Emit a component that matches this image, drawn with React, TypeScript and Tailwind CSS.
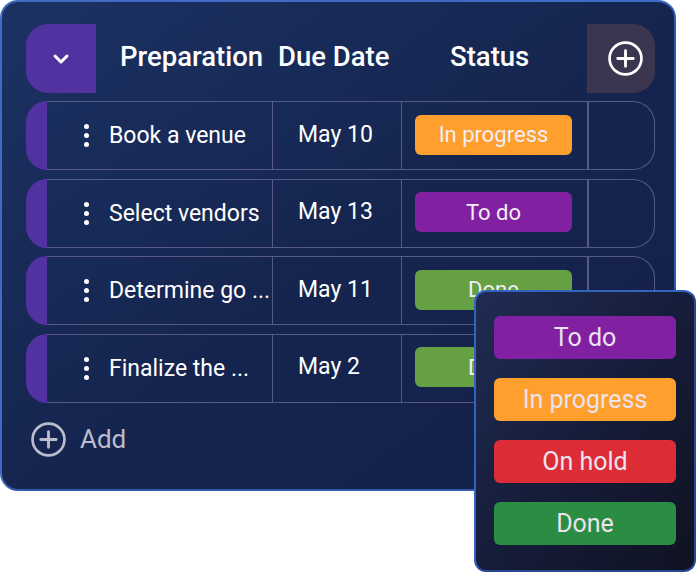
import type { ReactNode } from "react";

const rows = [
  { name: "Book a venue", date: "May 10", status: "In progress" },
  { name: "Select vendors", date: "May 13", status: "To do" },
  { name: "Determine go ...", date: "May 11", status: "Done" },
  { name: "Finalize the ...", date: "May 2", status: "Done" }
];

const badgeColors: Record<string, string> = {
  "In progress": "bg-[#ff9f2d]",
  "To do": "bg-[#8121a1]",
  Done: "bg-[#65a042]"
};

const menuItems = [
  { label: "To do", color: "bg-[#8121a1]" },
  { label: "In progress", color: "bg-[#ff9f2d]" },
  { label: "On hold", color: "bg-[#dc2d36]" },
  { label: "Done", color: "bg-[#2a8d43]" }
];

function PlusCircle({ size, className }: { size: number; className?: string }) {
  return (
    <svg width={size} height={size} viewBox="0 0 34 34" fill="none" className={className}>
      <circle cx="17" cy="17" r="15.5" stroke="currentColor" strokeWidth="2.6" />
      <path d="M17 9.5v15M9.5 17h15" stroke="currentColor" strokeWidth="2.8" strokeLinecap="round" />
    </svg>
  );
}

function Dots() {
  return (
    <div className="flex flex-col items-center gap-[4px]">
      <span className="h-[5px] w-[5px] rounded-full bg-white" />
      <span className="h-[5px] w-[5px] rounded-full bg-white" />
      <span className="h-[5px] w-[5px] rounded-full bg-white" />
    </div>
  );
}

function Cell({ className, children }: { className: string; children?: ReactNode }) {
  return <div className={`flex h-full items-center border-y border-[#575a87] ${className}`}>{children}</div>;
}

export default function App() {
  return (
    <div
      className="relative h-[572px] w-[696px] overflow-hidden bg-white"
      style={{ fontFamily: "Roboto, 'Noto Sans', sans-serif" }}
    >
      <div className="h-[491px] w-[676px] rounded-[18px] border-2 border-[#2f5aae] border-t-[#3e6bc4] border-l-[#3e6bc4] bg-gradient-to-br from-[#1c3263] via-[#15254f] to-[#142049] pl-[24px] pt-[22px]">
        {/* header */}
        <div className="flex h-[69px] items-center text-white">
          <div className="flex h-full w-[70px] items-center justify-center rounded-l-[22px] bg-[#5231a1]">
            <svg width="18" height="12" viewBox="0 0 18 12" fill="none">
              <path d="M3 3l6 6 6-6" stroke="white" strokeWidth="3" strokeLinecap="round" strokeLinejoin="round" />
            </svg>
          </div>
          <div className="-mt-[3px] w-[177px] whitespace-nowrap pl-[24px] text-[27.5px] font-medium">Preparation</div>
          <div className="-mt-[3px] w-[129px] whitespace-nowrap pl-[5px] text-[27.5px] font-medium">Due Date</div>
          <div className="-mt-[3px] w-[185px] pl-[48px] text-[27.5px] font-medium">Status</div>
          <div className="flex h-full w-[68px] items-center justify-center rounded-r-[22px] bg-[#3b3550] pl-[8px]">
            <PlusCircle size={35} className="text-white" />
          </div>
        </div>

        {/* rows */}
        <div className="mt-[8px] flex flex-col gap-[8.5px]">
          {rows.map((r) => (
            <div key={r.name} className="flex h-[69px] text-white">
              <div className="h-full w-[21px] rounded-l-[22px] bg-[#5231a1]" />
              <Cell className="w-[226px] border-r pl-[37px]">
                <Dots />
                <span className="ml-[20px] mt-[2px] whitespace-nowrap text-[23px]">{r.name}</span>
              </Cell>
              <Cell className="w-[129px] border-r pl-[25px]">
                <span className="-mt-[1px] text-[23px]">{r.date}</span>
              </Cell>
              <Cell className="w-[185px] pl-[13px]">
                <div
                  className={`-mt-[2px] flex h-[40px] w-[157px] items-center justify-center rounded-[6px] text-[22px] text-[#f3eef6] ${badgeColors[r.status]}`}
                >
                  {r.status}
                </div>
              </Cell>
              <div className="h-full w-[68px] rounded-r-[22px] border border-l-2 border-[#575a87]" />
            </div>
          ))}
        </div>

        {/* add */}
        <div className="mt-[17px] flex items-center gap-[14px] pl-[5px] text-[#bbbccd]">
          <PlusCircle size={35} />
          <span className="text-[26px]">Add</span>
        </div>
      </div>

      {/* status dropdown */}
      <div className="absolute left-[474px] top-[290px] flex h-[282px] w-[222px] flex-col gap-[19px] rounded-[12px] border-2 border-[#27478f] border-t-[#3462bd] border-l-[#3462bd] bg-gradient-to-br from-[#1f2c52] via-[#161d3a] to-[#101222] px-[18px] pt-[24px]">
        {menuItems.map((m) => (
          <div
            key={m.label}
            className={`flex h-[43px] items-center justify-center rounded-[6px] text-[25px] text-[#ebe3ef] ${m.color}`}
          >
            {m.label}
          </div>
        ))}
      </div>
    </div>
  );
}
